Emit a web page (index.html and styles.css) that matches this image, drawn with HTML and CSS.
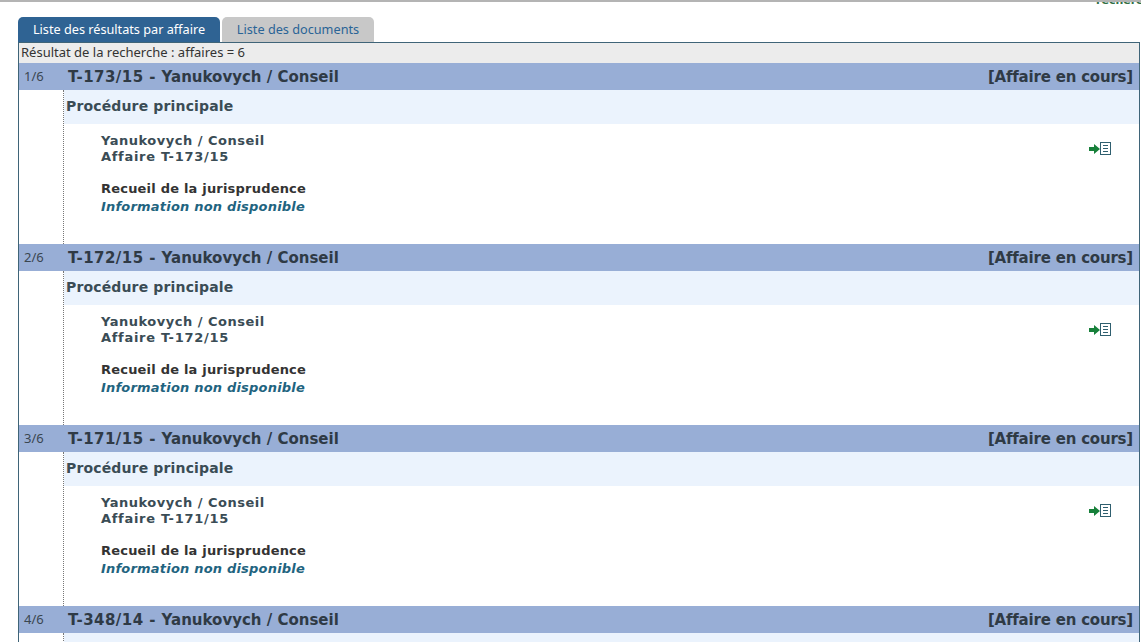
FILE: index.html
```html
<!DOCTYPE html>
<html lang="fr">
<head>
<meta charset="utf-8">
<title>Liste des résultats</title>
<link rel="stylesheet" href="styles.css">
</head>
<body>
<div class="page">
  <div class="topbar"><span class="search-link">rechercher</span></div>
  <div class="tabs">
    <div class="tab tab-active">Liste des résultats par affaire</div>
    <div class="tab tab-idle">Liste des documents</div>
  </div>
  <div class="panel">
    <div class="summary">Résultat de la recherche : affaires = 6</div>

    <section class="case">
      <header class="case-head"><span class="case-num">1/6</span><span class="case-title"><span class="case-code">T-173/15 - </span>Yanukovych / Conseil</span><span class="case-status">[Affaire en cours]</span></header>
      <div class="case-main">
        <div class="proc">Procédure principale</div>
        <div class="case-body">
          <div class="case-text">
            <div class="party">Yanukovych / Conseil</div>
            <div class="party-ref">Affaire T-173/15</div>
            <div class="rec">Recueil de la jurisprudence</div>
            <div class="na">Information non disponible</div>
          </div>
          <svg class="doc-icon" width="23" height="14" viewBox="0 0 23 14"><path d="M0 5h5V2l6 5-6 5V9H0z" fill="#17803a"/><rect x="11.5" y="0.5" width="10" height="12" fill="#fff" stroke="#2f5f6f"/><path d="M14 3.5h5M14 6.5h5M14 9.5h5" stroke="#2f5f6f"/></svg>
        </div>
      </div>
    </section>

    <section class="case">
      <header class="case-head"><span class="case-num">2/6</span><span class="case-title"><span class="case-code">T-172/15 - </span>Yanukovych / Conseil</span><span class="case-status">[Affaire en cours]</span></header>
      <div class="case-main">
        <div class="proc">Procédure principale</div>
        <div class="case-body">
          <div class="case-text">
            <div class="party">Yanukovych / Conseil</div>
            <div class="party-ref">Affaire T-172/15</div>
            <div class="rec">Recueil de la jurisprudence</div>
            <div class="na">Information non disponible</div>
          </div>
          <svg class="doc-icon" width="23" height="14" viewBox="0 0 23 14"><path d="M0 5h5V2l6 5-6 5V9H0z" fill="#17803a"/><rect x="11.5" y="0.5" width="10" height="12" fill="#fff" stroke="#2f5f6f"/><path d="M14 3.5h5M14 6.5h5M14 9.5h5" stroke="#2f5f6f"/></svg>
        </div>
      </div>
    </section>

    <section class="case">
      <header class="case-head"><span class="case-num">3/6</span><span class="case-title"><span class="case-code">T-171/15 - </span>Yanukovych / Conseil</span><span class="case-status">[Affaire en cours]</span></header>
      <div class="case-main">
        <div class="proc">Procédure principale</div>
        <div class="case-body">
          <div class="case-text">
            <div class="party">Yanukovych / Conseil</div>
            <div class="party-ref">Affaire T-171/15</div>
            <div class="rec">Recueil de la jurisprudence</div>
            <div class="na">Information non disponible</div>
          </div>
          <svg class="doc-icon" width="23" height="14" viewBox="0 0 23 14"><path d="M0 5h5V2l6 5-6 5V9H0z" fill="#17803a"/><rect x="11.5" y="0.5" width="10" height="12" fill="#fff" stroke="#2f5f6f"/><path d="M14 3.5h5M14 6.5h5M14 9.5h5" stroke="#2f5f6f"/></svg>
        </div>
      </div>
    </section>

    <section class="case">
      <header class="case-head"><span class="case-num">4/6</span><span class="case-title"><span class="case-code">T-348/14 - </span>Yanukovych / Conseil</span><span class="case-status">[Affaire en cours]</span></header>
      <div class="case-main">
        <div class="proc">Procédure principale</div>
      </div>
    </section>
  </div>
</div>
</body>
</html>
```
FILE: styles.css
```css
html, body {
  margin: 0;
  padding: 0;
  height: 100%;
  overflow: hidden;
  background: #fff;
}
.page {
  width: 1141px;
  height: 642px;
  overflow: hidden;
  font-family: "DejaVu Sans", sans-serif;
}
.topbar {
  height: 17px;
  border-top: 2px solid #b4b4b4;
  box-sizing: border-box;
  position: relative;
  overflow: hidden;
}
.search-link {
  position: absolute;
  top: -8px;
  left: 1096px;
  font-size: 11px;
  line-height: 14px;
  font-weight: bold;
  color: #2f6f45;
  white-space: nowrap;
}
.tabs {
  display: flex;
  gap: 2px;
  margin-left: 18px;
  height: 25px;
}
.tab {
  box-sizing: border-box;
  font-family: "Noto Sans", sans-serif;
  font-size: 12.7px;
  line-height: 25px;
  text-align: center;
  border-radius: 5px 5px 0 0;
}
.tab-active {
  width: 202px;
  background: #2f6393;
  color: #fff;
}
.tab-idle {
  width: 152px;
  background: #c8c8c8;
  color: #2a6496;
}
.panel {
  margin-left: 18px;
  width: 1122px;
  box-sizing: border-box;
  border: 1px solid #3f6478;
  border-bottom: 0;
}
.summary {
  height: 20px;
  box-sizing: border-box;
  padding-left: 2px;
  background: #ececec;
  font-family: "Noto Sans", sans-serif;
  font-size: 13px;
  line-height: 19px;
  color: #333;
}
.case-head {
  display: flex;
  align-items: center;
  height: 27px;
  background: #98aed6;
  color: #2f3a45;
}
.case-num {
  width: 49px;
  padding-left: 5px;
  padding-bottom: 1px;
  box-sizing: border-box;
  font-family: "Noto Sans", sans-serif;
  font-size: 13px;
  color: #3a4650;
}
.case-title, .case-status {
  font-size: 15px;
  font-weight: bold;
}
.case-code {
  letter-spacing: 0.45px;
}
.case-status {
  margin-left: auto;
  padding-right: 6px;
  letter-spacing: -0.2px;
}
.case-main {
  margin-left: 44px;
  border-left: 1px dotted #777;
}
.proc {
  height: 34px;
  box-sizing: border-box;
  padding-left: 2px;
  background: #ebf3fd;
  font-size: 14px;
  font-weight: bold;
  line-height: 32px;
  letter-spacing: 0.15px;
  color: #3a4c55;
}
.case-body {
  display: flex;
  justify-content: space-between;
  align-items: flex-start;
  height: 120px;
  box-sizing: border-box;
  padding: 9px 27px 0 37px;
}
.case-text {
  font-size: 13px;
  font-weight: bold;
}
.party, .party-ref {
  line-height: 16px;
  color: #3a4c55;
}
.party {
  letter-spacing: 0.5px;
}
.party-ref {
  letter-spacing: 0.7px;
}
.rec {
  margin-top: 16px;
  line-height: 16px;
  letter-spacing: 0.2px;
  color: #333;
}
.na {
  margin-top: 2px;
  line-height: 16px;
  font-style: italic;
  letter-spacing: 0.2px;
  color: #1f6480;
}
.doc-icon {
  margin-top: 9px;
}
```
